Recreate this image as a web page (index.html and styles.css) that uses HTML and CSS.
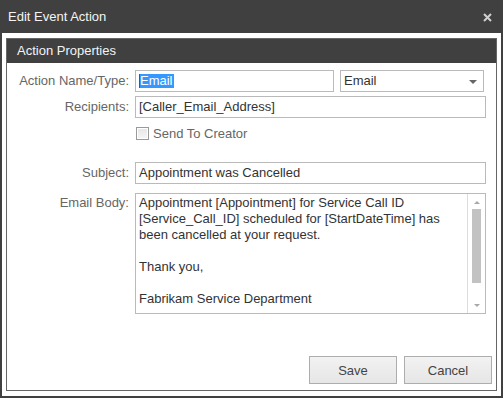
FILE: index.html
```html
<!DOCTYPE html>
<html lang="en">
<head>
    <meta charset="UTF-8">
    <title>Edit Event Action</title>
    <link rel="stylesheet" href="styles.css">
</head>
<body>
    <div class="window">
        <div class="titlebar">
            <span class="window-title">Edit Event Action</span>
            <svg class="close-icon" width="9" height="9" viewBox="0 0 9 9">
                <path d="M1 1L8 8M8 1L1 8" stroke="#cfcfcf" stroke-width="2"/>
            </svg>
        </div>
        <div class="window-body">
            <div class="panel">
                <div class="panel-header">Action Properties</div>
                <div class="form">
                    <div class="form-row">
                        <label class="form-label">Action Name/Type:</label>
                        <div class="form-field name-field">
                            <div class="input name-input"><span class="caret"></span><span class="selected">Email</span></div>
                            <div class="input select">Email<span class="select-arrow"></span></div>
                        </div>
                    </div>
                    <div class="form-row">
                        <label class="form-label">Recipients:</label>
                        <div class="form-field">
                            <div class="input">[Caller_Email_Address]</div>
                        </div>
                    </div>
                    <div class="form-row check-row">
                        <span class="form-label"></span>
                        <div class="form-field check-field">
                            <span class="checkbox"></span>
                            <span class="check-text">Send To Creator</span>
                        </div>
                    </div>
                    <div class="form-row subject-row">
                        <label class="form-label">Subject:</label>
                        <div class="form-field">
                            <div class="input">Appointment was Cancelled</div>
                        </div>
                    </div>
                    <div class="form-row body-row">
                        <label class="form-label">Email Body:</label>
                        <div class="form-field">
                            <div class="textarea">
                                <div class="textarea-text">
                                    <div>Appointment [Appointment] for Service Call ID</div>
                                    <div>[Service_Call_ID] scheduled for [StartDateTime] has</div>
                                    <div>been cancelled at your request.</div>
                                    <div>&nbsp;</div>
                                    <div>Thank you,</div>
                                    <div>&nbsp;</div>
                                    <div>Fabrikam Service Department</div>
                                </div>
                                <div class="scrollbar">
                                    <span class="scroll-arrow up"></span>
                                    <span class="scroll-thumb"></span>
                                    <span class="scroll-arrow down"></span>
                                </div>
                            </div>
                        </div>
                    </div>
                </div>
                <div class="buttons">
                    <button class="btn">Save</button>
                    <button class="btn">Cancel</button>
                </div>
            </div>
        </div>
    </div>
</body>
</html>
```

FILE: styles.css
```css
:root {
    --dark: #404040;
    --panel-border: #666666;
    --field-border: #bababa;
    --label-color: #666666;
    --text-color: #333333;
}

* {
    margin: 0;
    padding: 0;
    box-sizing: border-box;
}

body {
    font-family: 'Liberation Sans', Arial, sans-serif;
    font-size: 13px;
    width: 503px;
    height: 398px;
    overflow: hidden;
}

.window {
    height: 100vh;
    display: flex;
    flex-direction: column;
    background: var(--dark);
    padding: 0 2px 2px;
}

.titlebar {
    height: 33px;
    flex-shrink: 0;
    display: flex;
    align-items: center;
    justify-content: space-between;
    padding: 0 9px 0 6px;
    color: #f4f4f4;
}

.close-icon {
    display: block;
    margin-top: 1px;
}

.window-body {
    flex: 1;
    background: #ffffff;
    padding: 5px 4px;
    display: flex;
}

.panel {
    flex: 1;
    border: 1px solid var(--panel-border);
    display: flex;
    flex-direction: column;
}

.panel-header {
    height: 24px;
    line-height: 24px;
    background: var(--dark);
    color: #f4f4f4;
    padding-left: 10px;
}

.form {
    padding: 7px 10px 0 0;
    display: flex;
    flex-direction: column;
}

.form-row {
    display: flex;
    margin-bottom: 4px;
}

.form-label {
    width: 122px;
    flex-shrink: 0;
    margin-right: 6px;
    text-align: right;
    color: var(--label-color);
    line-height: 22px;
}

.form-field {
    flex: 1;
    display: flex;
}

.input {
    flex: 1;
    height: 22px;
    border: 1px solid var(--field-border);
    padding: 0 3px;
    line-height: 20px;
    color: var(--text-color);
    white-space: nowrap;
    overflow: hidden;
}

.name-field {
    gap: 6px;
    padding-right: 1px;
}

.name-input {
    flex: 0 0 199px;
    display: flex;
    align-items: center;
    padding-left: 3px;
}

.caret {
    width: 1px;
    height: 14px;
    background: #7a4a2a;
}

.selected {
    background: #3399ff;
    color: #ffffff;
    line-height: 14px;
    padding-right: 1px;
}

.select {
    position: relative;
    margin-right: 1px;
}

.select-arrow {
    position: absolute;
    right: 6px;
    top: 9px;
    border-left: 4px solid transparent;
    border-right: 4px solid transparent;
    border-top: 4px solid #666666;
}

.check-row {
    height: 22px;
    margin-bottom: 18px;
}

.check-field {
    align-items: center;
    gap: 4px;
    padding-left: 1px;
    padding-top: 1px;
}

.checkbox {
    width: 13px;
    height: 13px;
    border: 1px solid #9a9a9a;
    background: linear-gradient(to bottom, #e6e6e6, #f6f6f6);
    box-shadow: inset 0 0 0 1px #ffffff;
}

.check-text {
    color: var(--label-color);
}

.subject-row {
    margin-bottom: 9px;
}

.body-row .form-label {
    line-height: 16px;
    padding-top: 2px;
}

.textarea {
    flex: 1;
    height: 121px;
    border: 1px solid var(--field-border);
    display: flex;
    color: var(--text-color);
}

.textarea-text {
    flex: 1;
    padding: 1px 3px;
    line-height: 16px;
}

.scrollbar {
    width: 18px;
    border-left: 1px solid #dddddd;
    display: flex;
    flex-direction: column;
    align-items: center;
    padding: 7px 0 6px;
}

.scroll-arrow {
    border-left: 3px solid transparent;
    border-right: 3px solid transparent;
}

.scroll-arrow.up {
    border-bottom: 3px solid #a8a8a8;
}

.scroll-arrow.down {
    border-top: 3px solid #a8a8a8;
}

.scroll-thumb {
    width: 9px;
    height: 74px;
    background: #c2c2c2;
    margin: 5px 0 auto;
}

.buttons {
    margin-top: auto;
    display: flex;
    justify-content: flex-end;
    gap: 7px;
    padding: 0 4px 6px 0;
}

.btn {
    width: 88px;
    height: 28px;
    border: 1px solid #adadad;
    background: linear-gradient(to bottom, #f2f2f2, #e6e6e6);
    color: #444444;
    font-family: 'Liberation Sans', Arial, sans-serif;
    font-size: 13px;
}
```
